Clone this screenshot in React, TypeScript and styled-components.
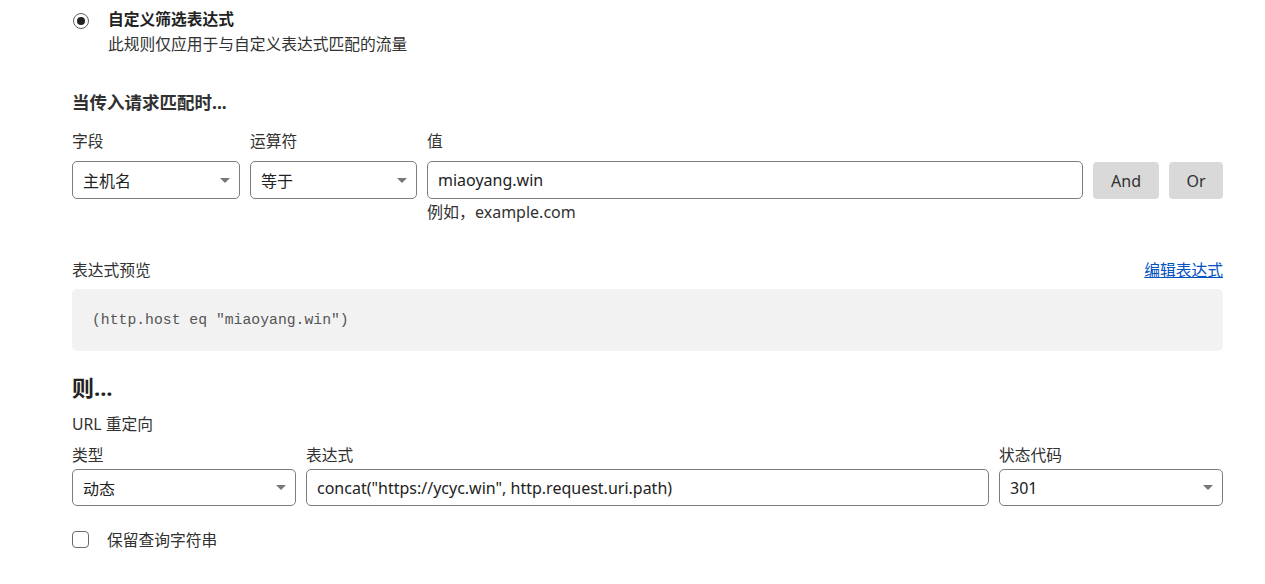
import React from "react";
import styled, { createGlobalStyle } from "styled-components";

const Global = createGlobalStyle`
  html, body { margin: 0; padding: 0; background: #fff; }
  body {
    font-family: "Noto Sans", "Noto Sans CJK SC", sans-serif;
    color: #313131;
    font-size: 15.75px;
  }
`;

const Page = styled.div`
  width: 1151px;
  padding: 7px 42px 0 72px;
  display: flex;
  flex-direction: column;
`;

const RadioRow = styled.div`
  display: flex;
  align-items: flex-start;
  gap: 19px;
  padding-left: 1px;
`;

const RadioCircle = styled.span`
  width: 16px;
  height: 16px;
  border: 1px solid #5e5e5e;
  border-radius: 50%;
  box-sizing: border-box;
  display: flex;
  align-items: center;
  justify-content: center;
  margin-top: 6px;
  &::after {
    content: "";
    width: 8px;
    height: 8px;
    border-radius: 50%;
    background: #222;
  }
`;

const RadioText = styled.div`
  display: flex;
  flex-direction: column;
  line-height: 25px;
`;

const RadioTitle = styled.div`
  font-weight: 700;
  color: #222;
`;

const RadioDesc = styled.div`
  color: #313131;
`;

const SectionTitle = styled.h3`
  margin: 33px 0 0;
  font-size: 17.5px;
  font-weight: 700;
  line-height: 24px;
  color: #313131;
`;

const BigTitle = styled.h2`
  margin: 21px 0 0;
  font-size: 22px;
  font-weight: 700;
  line-height: 30px;
  color: #222;
`;

const Row = styled.div<{ $cols: string; $top: number }>`
  display: grid;
  grid-template-columns: ${(p) => p.$cols};
  column-gap: 10px;
  margin-top: ${(p) => p.$top}px;
  align-items: start;
`;

const Field = styled.div`
  display: flex;
  flex-direction: column;
`;

const Label = styled.label<{ $gap?: number }>`
  line-height: 20px;
  color: #313131;
  margin-bottom: ${(p) => p.$gap ?? 10}px;
`;

const Box = styled.div<{ $h?: number }>`
  height: ${(p) => p.$h ?? 38}px;
  box-sizing: border-box;
  border: 1px solid #7c7c7c;
  border-radius: 5px;
  display: flex;
  align-items: center;
  padding: 0 9px 0 10px;
  font-size: 16px;
  color: #222;
  background: #fff;
`;

const BoxText = styled.span`
  flex: 1;
  white-space: nowrap;
  overflow: hidden;
`;

const Caret = styled.span`
  width: 0;
  height: 0;
  border-left: 5px solid transparent;
  border-right: 5px solid transparent;
  border-top: 5px solid #777;
`;

const Hint = styled.div`
  font-size: 16px;
  line-height: 22px;
  color: #313131;
  margin-top: 2px;
`;

const Button = styled.button`
  margin-top: 31px;
  height: 37px;
  border: none;
  border-radius: 4px;
  background: #d9d9d9;
  color: #313131;
  font-family: inherit;
  font-size: 16px;
  padding: 0;
`;

const PreviewHeader = styled.div`
  display: flex;
  justify-content: space-between;
  align-items: center;
  margin-top: 36px;
  line-height: 22px;
`;

const Link = styled.a`
  color: #0051c3;
  text-decoration: underline;
`;

const Preview = styled.div`
  margin-top: 8px;
  height: 62px;
  background: #f2f2f2;
  border-radius: 5px;
  display: flex;
  align-items: center;
  padding-left: 20px;
  font-family: "Liberation Mono", "DejaVu Sans Mono", monospace;
  font-size: 14.75px;
  color: #555;
`;

const SubLabel = styled.div`
  margin-top: 12px;
  line-height: 20px;
`;

const CheckRow = styled.div`
  display: flex;
  align-items: center;
  gap: 18px;
  margin-top: 22px;
`;

const CheckBox = styled.span`
  width: 17px;
  height: 17px;
  box-sizing: border-box;
  border: 1px solid #6a6a6a;
  border-radius: 4px;
`;

const Select: React.FC<{ value: string; h?: number }> = ({ value, h }) => (
  <Box $h={h}>
    <BoxText>{value}</BoxText>
    <Caret />
  </Box>
);

export default function App() {
  return (
    <>
      <Global />
      <Page>
        <RadioRow>
          <RadioCircle />
          <RadioText>
            <RadioTitle>自定义筛选表达式</RadioTitle>
            <RadioDesc>此规则仅应用于与自定义表达式匹配的流量</RadioDesc>
          </RadioText>
        </RadioRow>

        <SectionTitle>当传入请求匹配时...</SectionTitle>

        <Row $cols="168px 167px 656px 66px 54px" $top={17}>
          <Field>
            <Label>字段</Label>
            <Select value="主机名" />
          </Field>
          <Field>
            <Label>运算符</Label>
            <Select value="等于" />
          </Field>
          <Field>
            <Label>值</Label>
            <Box>
              <BoxText>miaoyang.win</BoxText>
            </Box>
            <Hint>例如，example.com</Hint>
          </Field>
          <Button>And</Button>
          <Button>Or</Button>
        </Row>

        <PreviewHeader>
          <span>表达式预览</span>
          <Link href="#">编辑表达式</Link>
        </PreviewHeader>
        <Preview>(http.host eq "miaoyang.win")</Preview>

        <BigTitle>则...</BigTitle>
        <SubLabel>URL 重定向</SubLabel>

        <Row $cols="224px 683px 224px" $top={11}>
          <Field>
            <Label $gap={4}>类型</Label>
            <Select value="动态" h={37} />
          </Field>
          <Field>
            <Label $gap={4}>表达式</Label>
            <Box $h={37}>
              <BoxText>concat("https://ycyc.win", http.request.uri.path)</BoxText>
            </Box>
          </Field>
          <Field>
            <Label $gap={4}>状态代码</Label>
            <Select value="301" h={37} />
          </Field>
        </Row>

        <CheckRow>
          <CheckBox />
          <span>保留查询字符串</span>
        </CheckRow>
      </Page>
    </>
  );
}
